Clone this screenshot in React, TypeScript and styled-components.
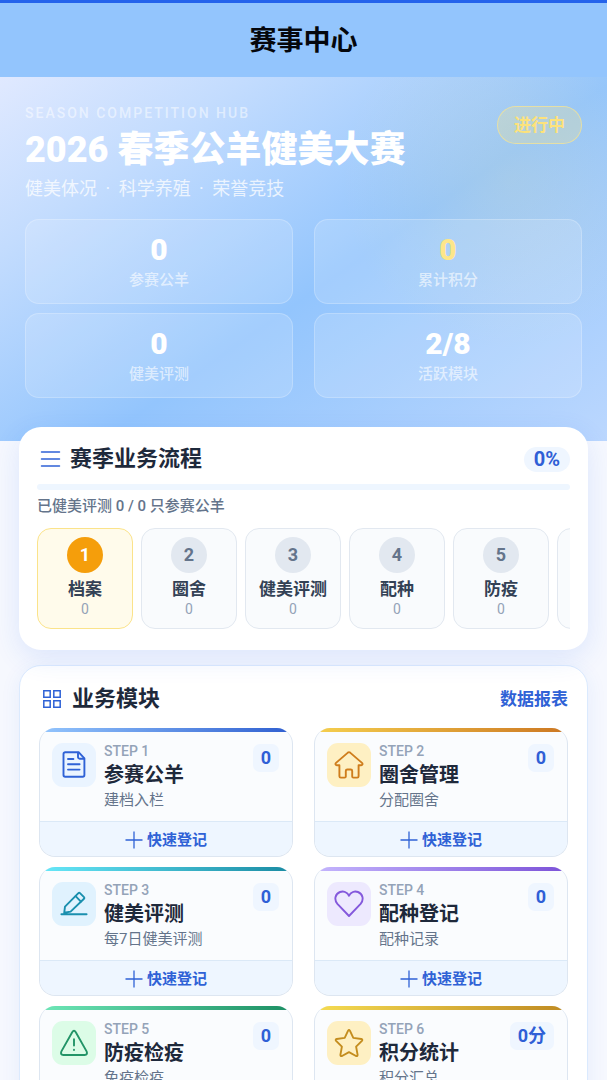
import React from "react";
import styled, { createGlobalStyle } from "styled-components";

const GlobalStyle = createGlobalStyle`
  *, *::before, *::after { box-sizing: border-box; }
  body {
    margin: 0;
    background: #f6f8fe;
    color: #1e293b;
    font-family: Roboto, "Noto Sans CJK SC", sans-serif;
  }
  h1, h2, h3, p, dl, dd, dt { margin: 0; }
  button { font-family: inherit; cursor: pointer; }
`;

const Page = styled.div`
  min-height: 100vh;
  padding-bottom: 24px;
`;

const TopBar = styled.header`
  display: flex;
  align-items: center;
  justify-content: center;
  height: 77px;
  padding-top: 2px;
  border-top: 3px solid #2563eb;
  background: #93c5fd;
`;

const PageTitle = styled.h1`
  color: #05070c;
  font-size: 27px;
  line-height: 36px;
  font-weight: 700;
`;

const Hero = styled.section`
  padding: 28px 25px 43px;
  background:
    radial-gradient(circle at 84% 28%, rgba(253, 230, 138, 0.15) 0, rgba(253, 230, 138, 0) 170px),
    linear-gradient(145deg, #e0e9ff 0%, #c3dcfe 22%, #93c5fd 55%, #bbd7fe 100%);
`;

const HeroTop = styled.div`
  display: flex;
  align-items: flex-start;
  justify-content: space-between;
`;

const Eyebrow = styled.p`
  color: rgba(255, 255, 255, 0.5);
  font-size: 14px;
  line-height: 16px;
  font-weight: 500;
  letter-spacing: 2px;
`;

const SeasonName = styled.h2`
  margin-top: 5px;
  color: #fff;
  font-size: 36px;
  line-height: 48px;
  font-weight: 900;
`;

const Tagline = styled.p`
  margin-top: 3px;
  color: rgba(255, 255, 255, 0.75);
  font-size: 18px;
  line-height: 24px;
`;

const Dot = styled.span`
  margin: 0 4px;
`;

const StatusPill = styled.span`
  flex: none;
  margin-top: 1px;
  padding: 0 16px;
  border: 1px solid rgba(253, 230, 138, 0.65);
  border-radius: 19px;
  background: rgba(253, 230, 138, 0.25);
  color: #fde27a;
  font-size: 17px;
  line-height: 36px;
  font-weight: 700;
`;

const StatGrid = styled.dl`
  display: grid;
  grid-template-columns: repeat(2, 1fr);
  gap: 9px 21px;
  margin-top: 18px;
`;

const Stat = styled.div`
  display: flex;
  flex-direction: column-reverse;
  gap: 3px;
  padding: 13px 8px;
  border: 1px solid rgba(255, 255, 255, 0.22);
  border-radius: 14px;
  background: rgba(255, 255, 255, 0.15);
  text-align: center;
`;

const StatLabel = styled.dt`
  color: rgba(255, 255, 255, 0.62);
  font-size: 15px;
  line-height: 20px;
  font-weight: 500;
`;

const StatValue = styled.dd<{ $gold?: boolean }>`
  color: ${(p) => (p.$gold ? "#fde68a" : "#fff")};
  font-size: 30px;
  line-height: 34px;
  font-weight: 900;
`;

const FlowCard = styled.section`
  position: relative;
  margin: -14px 19px 0;
  padding: 17px 18px 21px;
  border-radius: 22px;
  background: #fff;
  box-shadow: 0 8px 28px rgba(37, 99, 235, 0.12);
`;

const CardHead = styled.div`
  display: flex;
  align-items: center;
  justify-content: space-between;
`;

const CardTitle = styled.h2`
  display: flex;
  align-items: center;
  gap: 7px;
  font-size: 22px;
  line-height: 30px;
  font-weight: 700;

  svg { color: #2f62d6; }
`;

const Percent = styled.span`
  padding: 0 10px;
  border-radius: 13px;
  background: #eff6ff;
  color: #2f5fd6;
  font-size: 20px;
  line-height: 25px;
  font-weight: 700;
`;

const Track = styled.div`
  height: 6px;
  margin-top: 10px;
  border-radius: 3px;
  background: #eef6ff;
`;

const FlowNote = styled.p`
  margin-top: 6px;
  color: #64748b;
  font-size: 15px;
  line-height: 20px;
  font-weight: 500;
`;

const StepList = styled.div`
  display: flex;
  gap: 8px;
  margin-top: 12px;
  overflow-x: auto;
  scrollbar-width: none;
`;

const StepNumber = styled.span<{ $active?: boolean }>`
  width: 36px;
  border-radius: 50%;
  background: ${(p) => (p.$active ? "#f59e0b" : "#e2e8f0")};
  color: ${(p) => (p.$active ? "#fff" : "#64748b")};
  font-size: 18px;
  line-height: 36px;
  font-weight: 700;
`;

const Step = styled.button<{ $active?: boolean }>`
  display: flex;
  flex: none;
  flex-direction: column;
  align-items: center;
  width: 96px;
  padding: 8px 0 11px;
  border: 1px solid ${(p) => (p.$active ? "#fbe38a" : "#e2e8f0")};
  border-radius: 14px;
  background: ${(p) => (p.$active ? "#fffbeb" : "#f9fbfd")};
`;

const StepName = styled.span`
  margin-top: 5px;
  color: #334155;
  font-size: 17px;
  line-height: 22px;
  font-weight: 700;
`;

const StepCount = styled.span`
  margin-top: 1px;
  color: #94a3b8;
  font-size: 14px;
  line-height: 16px;
`;

const ModulesCard = styled.section`
  margin: 15px 19px 0;
  padding: 18px 19px 20px;
  border: 1px solid #dbeafe;
  border-radius: 22px;
  background: #fff;
  box-shadow: 0 4px 20px rgba(37, 99, 235, 0.08);
`;

const ReportLink = styled.a`
  color: #2f62d6;
  font-size: 17px;
  line-height: 24px;
  font-weight: 600;
  text-decoration: none;
`;

const ModuleGrid = styled.div`
  display: grid;
  grid-template-columns: repeat(2, 1fr);
  gap: 10px 21px;
  margin-top: 14px;
`;

const Module = styled.article`
  overflow: hidden;
  border: 1px solid #dde6f1;
  border-top: 0;
  border-radius: 16px;
  background: #fafcfe;
`;

const Accent = styled.div<{ $from: string; $to: string }>`
  height: 4px;
  background: linear-gradient(90deg, ${(p) => p.$from}, ${(p) => p.$to});
`;

const ModuleBody = styled.div`
  display: flex;
  align-items: flex-start;
  gap: 8px;
  padding: 10px 13px 11px 12px;
`;

const IconTile = styled.div<{ $color: string; $tint: string }>`
  display: grid;
  place-items: center;
  flex: none;
  width: 44px;
  height: 44px;
  margin-top: 1px;
  border-radius: 11px;
  background: ${(p) => p.$tint};
  color: ${(p) => p.$color};
`;

const ModuleText = styled.div`
  flex: 1;
  min-width: 0;
`;

const StepTag = styled.p`
  color: #94a3b8;
  font-size: 14px;
  line-height: 19px;
  font-weight: 500;
`;

const ModuleName = styled.h3`
  font-size: 20px;
  line-height: 28px;
  font-weight: 700;
`;

const ModuleHint = styled.p`
  margin-top: 1px;
  color: #64748b;
  font-size: 15px;
  line-height: 20px;
`;

const CountBadge = styled.span`
  flex: none;
  margin-top: 2px;
  padding: 0 8px;
  border-radius: 7px;
  background: #eff6ff;
  color: #2f5fd6;
  font-size: 18px;
  line-height: 28px;
  font-weight: 700;
`;

const QuickButton = styled.button`
  display: flex;
  align-items: center;
  justify-content: center;
  gap: 4px;
  width: 100%;
  height: 35px;
  padding: 1px 0 0;
  border: 0;
  border-top: 1px solid #dbe9f7;
  background: #eef6ff;
  color: #2f62d6;
  font-size: 15px;
  line-height: 20px;
  font-weight: 600;
`;

const Glyph = ({ children }: { children: React.ReactNode }) => (
  <svg width="30" height="30" viewBox="0 0 30 30" fill="none" stroke="currentColor" strokeWidth="1.9" strokeLinecap="round" strokeLinejoin="round" aria-hidden="true">
    {children}
  </svg>
);

const DocIcon = () => (
  <Glyph>
    <path d="M6.2 2.2H19.6L25.4 8.4V25A1.7 1.7 0 0 1 23.7 26.7H6.2A1.7 1.7 0 0 1 4.5 25V3.9A1.7 1.7 0 0 1 6.2 2.2Z" />
    <path d="M19 2.6V7A1.6 1.6 0 0 0 20.6 8.7H25M9 9H14.4M9 14.2H20.6M9 19.6H20.6" />
  </Glyph>
);

const HouseIcon = () => (
  <Glyph>
    <path d="M13.9 2.6Q15 1.7 16.1 2.6L28 12.9C29 13.8 28.4 15.3 27.2 15.3H24.6V26.2Q24.6 27.6 23.2 27.6H19.4Q18.2 27.6 18.2 26.4V21Q18.2 19.5 16.7 19.5H13.3Q11.8 19.5 11.8 21V26.4Q11.8 27.6 10.6 27.6H6.8Q5.4 27.6 5.4 26.2V15.3H2.8C1.6 15.3 1 13.8 2 12.9Z" />
  </Glyph>
);

const PencilIcon = () => (
  <Glyph>
    <path d="M2.4 25.2H27.6M5.2 23.8L6 17.6L19.4 4.2Q20.2 3.4 21 4.2L25 8.2Q25.8 9 25 9.8L11.6 22.6Z" />
    <path d="M16.6 7.2L21.9 12.6" />
  </Glyph>
);

const HeartIcon = () => (
  <Glyph>
    <path d="M15 27L3.4 14.9C-.2 10.8 1.2 4.7 6 3C9.4 1.8 13.2 3.2 15 6.7C16.8 3.2 20.6 1.8 24 3C28.8 4.7 30.2 10.8 26.6 14.9Z" />
  </Glyph>
);

const WarnIcon = () => (
  <Glyph>
    <path d="M13.2 4.2Q15 1.4 16.8 4.2L27.6 23.4Q29 26.8 25.6 27H4.4Q1 26.8 2.4 23.4Z" />
    <path d="M15 11.2V17.6M15 21.8V22" />
  </Glyph>
);

const StarIcon = () => (
  <Glyph>
    <path d="M14.1 2.7Q15 1.3 15.9 2.7L19.3 9.9L27.3 11Q29 11.5 27.9 12.9L22.1 18.6L23.6 26.8Q23.6 28.5 22 28L15 24.2L8 28Q6.4 28.5 6.4 26.8L7.9 18.6L2.1 12.9Q1 11.5 2.7 11L10.7 9.9Z" />
  </Glyph>
);

const ListIcon = () => (
  <svg width="26" height="26" viewBox="0 0 26 26" fill="none" stroke="currentColor" strokeWidth="1.5" strokeLinecap="round" aria-hidden="true">
    <path d="M4.5 6H22.5M4.5 13H22.5M4.5 20H22.5" />
  </svg>
);

const GridIcon = () => (
  <svg width="26" height="26" viewBox="0 0 26 26" fill="none" stroke="currentColor" strokeWidth="1.5" aria-hidden="true">
    <path d="M4.8 4.8H11.2V11.2H4.8ZM14.8 4.8H21.2V11.2H14.8ZM4.8 14.8H11.2V21.2H4.8ZM14.8 14.8H21.2V21.2H14.8Z" />
  </svg>
);

const PlusIcon = () => (
  <svg width="18" height="18" viewBox="0 0 18 18" fill="none" stroke="currentColor" strokeWidth="1.3" aria-hidden="true">
    <path d="M9 .5V17.5M.5 9H17.5" />
  </svg>
);

const stats = [
  { label: "参赛公羊", value: "0" },
  { label: "累计积分", value: "0", gold: true },
  { label: "健美评测", value: "0" },
  { label: "活跃模块", value: "2/8" },
];

const steps = ["档案", "圈舍", "健美评测", "配种", "防疫", "积分"];

const modules = [
  { name: "参赛公羊", hint: "建档入栏", count: "0", icon: <DocIcon />, color: "#2f62d6", tint: "#eaf4ff", from: "#93c5fd", to: "#2f5fd0" },
  { name: "圈舍管理", hint: "分配圈舍", count: "0", icon: <HouseIcon />, color: "#cf7d1c", tint: "#fef0c3", from: "#f5cf4e", to: "#cc7722" },
  { name: "健美评测", hint: "每7日健美评测", count: "0", icon: <PencilIcon />, color: "#1a8fae", tint: "#e0f2fe", from: "#67e8f9", to: "#1a8ba3" },
  { name: "配种登记", hint: "配种记录", count: "0", icon: <HeartIcon />, color: "#8459dc", tint: "#ede9fe", from: "#c4b5fd", to: "#7c52d8" },
  { name: "防疫检疫", hint: "免疫检疫", count: "0", icon: <WarnIcon />, color: "#229467", tint: "#dcfce7", from: "#6ee7b7", to: "#1c8f63" },
  { name: "积分统计", hint: "积分汇总", count: "0分", icon: <StarIcon />, color: "#c48d1e", tint: "#fef0c3", from: "#f5dc52", to: "#bf8a22" },
];

export default function App() {
  return (
    <Page>
      <GlobalStyle />
      <TopBar>
        <PageTitle>赛事中心</PageTitle>
      </TopBar>
      <main>
        <Hero>
          <HeroTop>
            <div>
              <Eyebrow>SEASON COMPETITION HUB</Eyebrow>
              <SeasonName>2026 春季公羊健美大赛</SeasonName>
              <Tagline>
                健美体况 <Dot>·</Dot> 科学养殖 <Dot>·</Dot> 荣誉竞技
              </Tagline>
            </div>
            <StatusPill>进行中</StatusPill>
          </HeroTop>
          <StatGrid>
            {stats.map((s) => (
              <Stat key={s.label}>
                <StatLabel>{s.label}</StatLabel>
                <StatValue $gold={s.gold}>{s.value}</StatValue>
              </Stat>
            ))}
          </StatGrid>
        </Hero>

        <FlowCard>
          <CardHead>
            <CardTitle><ListIcon />赛季业务流程</CardTitle>
            <Percent>0%</Percent>
          </CardHead>
          <Track role="progressbar" aria-label="赛季业务流程" aria-valuenow={0} aria-valuemin={0} aria-valuemax={100} />
          <FlowNote>已健美评测 0 / 0 只参赛公羊</FlowNote>
          <StepList>
            {steps.map((name, i) => (
              <Step key={name} type="button" $active={i === 0}>
                <StepNumber $active={i === 0}>{i + 1}</StepNumber>
                <StepName>{name}</StepName>
                <StepCount>0</StepCount>
              </Step>
            ))}
          </StepList>
        </FlowCard>

        <ModulesCard>
          <CardHead>
            <CardTitle><GridIcon />业务模块</CardTitle>
            <ReportLink href="#reports">数据报表</ReportLink>
          </CardHead>
          <ModuleGrid>
            {modules.map((m, i) => (
              <Module key={m.name}>
                <Accent $from={m.from} $to={m.to} />
                <ModuleBody>
                  <IconTile $color={m.color} $tint={m.tint}>{m.icon}</IconTile>
                  <ModuleText>
                    <StepTag>STEP {i + 1}</StepTag>
                    <ModuleName>{m.name}</ModuleName>
                    <ModuleHint>{m.hint}</ModuleHint>
                  </ModuleText>
                  <CountBadge>{m.count}</CountBadge>
                </ModuleBody>
                <QuickButton type="button"><PlusIcon />快速登记</QuickButton>
              </Module>
            ))}
          </ModuleGrid>
        </ModulesCard>
      </main>
    </Page>
  );
}
